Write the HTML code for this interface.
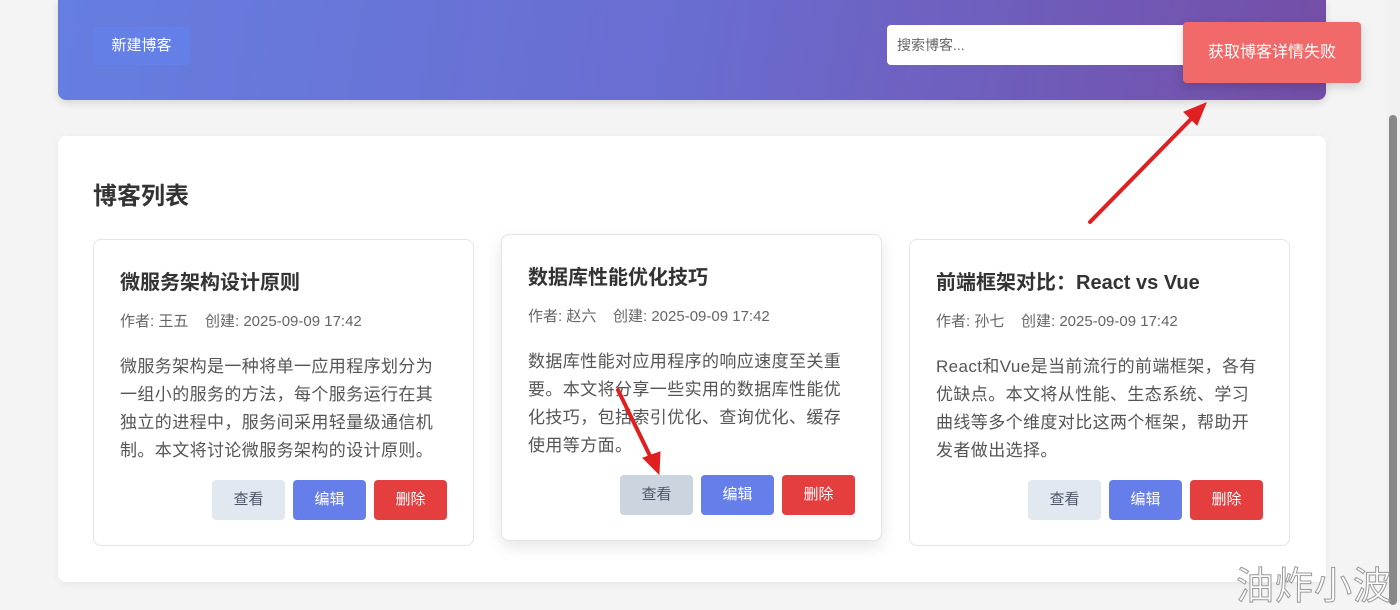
<!DOCTYPE html>
<html><head><meta charset="utf-8"><style>
*{box-sizing:border-box;margin:0;padding:0}
body{width:1400px;height:603px;background:#f4f4f4;font-family:"Liberation Sans","Noto Sans CJK SC",sans-serif;position:relative;overflow:hidden}
.hdr{position:absolute;left:58px;top:0;width:1268px;height:100px;background:linear-gradient(100deg,#667ee0,#6a6cd0 50%,#744ea6);border-radius:0 0 8px 8px;box-shadow:0 3px 8px rgba(0,0,0,.12)}
.new{position:absolute;left:35px;top:27px;width:97px;height:38px;background:rgba(100,130,235,.7);color:#fff;font-size:15px;line-height:38px;text-align:center;border-radius:3px}
.search{position:absolute;left:829px;top:25px;width:320px;height:40px;background:#fff;border-radius:4px;color:#666;font-size:14px;line-height:40px;padding-left:10px}
.toast{position:absolute;left:1183px;top:22px;width:178px;height:61px;background:#f26969;border-radius:4px;color:#fff;font-size:16px;line-height:61px;text-align:center;box-shadow:0 4px 10px rgba(0,0,0,.15)}
.main{position:absolute;left:58px;top:136px;width:1268px;height:446px;background:#fff;border-radius:8px;box-shadow:0 2px 8px rgba(0,0,0,.06)}
h2{position:absolute;left:93px;top:176px;font-size:24px;font-weight:bold;color:#333}
.card{position:absolute;width:381px;height:307px;background:#fff;border:1px solid #e5e5e5;border-radius:8px;padding:0 26px}
.card.h{box-shadow:0 6px 16px rgba(0,0,0,.1)}
.card h3{margin-top:31px;font-size:20px;color:#333;font-weight:bold;line-height:24px}
.meta{margin-top:17px;font-size:15px;color:#666;line-height:20px;white-space:pre}
.desc{margin-top:21px;font-size:17px;letter-spacing:0.4px;color:#555;line-height:28px;white-space:nowrap}
.btns{position:absolute;right:26px;top:240px;display:flex;gap:8px}
.btns span{width:73px;height:40px;border-radius:4px;font-size:15px;line-height:40px;text-align:center;color:#fff}
.v{background:#e2e8f0;color:#4a5568!important}.h .v{background:#cbd5e0}
.e{background:#667eea}.d{background:#e53e3e}
.sb{position:absolute;right:0;top:0;width:14px;height:603px;background:#f1f1f1}
.sb i{position:absolute;left:3px;top:115px;width:8px;height:490px;background:#888;border-radius:4px}
.wm{position:absolute;left:1236px;top:555px;font-size:38px;color:#fff;-webkit-text-stroke:1px #999;font-family:"Noto Sans CJK SC",sans-serif;letter-spacing:1px}
</style></head><body>
<div class="hdr"><div class="new">新建博客</div><div class="search">搜索博客...</div></div>
<div class="toast">获取博客详情失败</div>
<div class="main"></div>
<h2>博客列表</h2>
<div class="card" style="left:93px;top:239px"><h3>微服务架构设计原则</h3><div class="meta">作者: 王五    创建: 2025-09-09 17:42</div><div class="desc">微服务架构是一种将单一应用程序划分为<br>一组小的服务的方法，每个服务运行在其<br>独立的进程中，服务间采用轻量级通信机<br>制。本文将讨论微服务架构的设计原则。</div><div class="btns"><span class="v">查看</span><span class="e">编辑</span><span class="d">删除</span></div></div>
<div class="card h" style="left:501px;top:234px"><h3>数据库性能优化技巧</h3><div class="meta">作者: 赵六    创建: 2025-09-09 17:42</div><div class="desc">数据库性能对应用程序的响应速度至关重<br>要。本文将分享一些实用的数据库性能优<br>化技巧，包括索引优化、查询优化、缓存<br>使用等方面。</div><div class="btns"><span class="v">查看</span><span class="e">编辑</span><span class="d">删除</span></div></div>
<div class="card" style="left:909px;top:239px"><h3>前端框架对比：React vs Vue</h3><div class="meta">作者: 孙七    创建: 2025-09-09 17:42</div><div class="desc">React和Vue是当前流行的前端框架，各有<br>优缺点。本文将从性能、生态系统、学习<br>曲线等多个维度对比这两个框架，帮助开<br>发者做出选择。</div><div class="btns"><span class="v">查看</span><span class="e">编辑</span><span class="d">删除</span></div></div>
<svg style="position:absolute;left:0;top:0" width="1400" height="603">
<g stroke="#e02020" stroke-width="4" stroke-linecap="round" fill="#e02020">
<line x1="1090" y1="222" x2="1195" y2="115"/><polygon points="1206,103 1184,112 1197,125" stroke-width="1"/>
<line x1="618" y1="390" x2="652" y2="460"/><polygon points="659,474 643,458 660,452" stroke-width="1"/>
</g></svg>
<div class="sb"><i></i></div>
<div class="wm">油炸小波</div>
</body></html>
